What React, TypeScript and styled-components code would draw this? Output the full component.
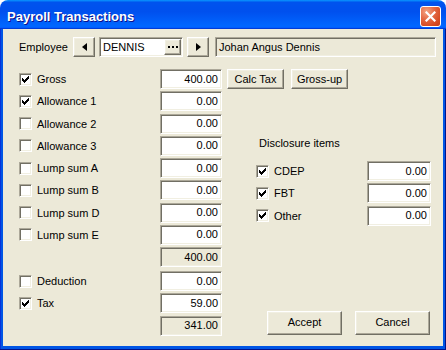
import styled, { createGlobalStyle, css } from "styled-components";

const GlobalStyle = createGlobalStyle`
  html, body {
    margin: 0;
    padding: 0;
    background: #ffffff;
  }
  body {
    font-family: "Liberation Sans", Arial, sans-serif;
    font-size: 11px;
    color: #000;
  }
`;

const sunken = css`
  box-sizing: border-box;
  border: 1px solid;
  border-color: #aca899 #ffffff #ffffff #aca899;
  box-shadow: inset 1px 1px #716f64, inset -1px -1px #f1efe2;
`;

const raised = css`
  box-sizing: border-box;
  border: 1px solid;
  border-color: #ffffff #716f64 #716f64 #ffffff;
  box-shadow: inset -1px -1px #aca899, inset 1px 1px #f1efe2;
  background: #ece9d8;
`;

const Window = styled.div`
  width: 446px;
  height: 350px;
  display: flex;
  flex-direction: column;
  border-radius: 8px 8px 0 0;
  overflow: hidden;
`;

const TitleBar = styled.div`
  height: 29px;
  flex: none;
  box-sizing: border-box;
  display: flex;
  align-items: center;
  justify-content: space-between;
  padding: 3px 5px 0 7px;
  background: linear-gradient(
    180deg,
    #0997ff,
    #0053ee 8%,
    #0050ee 40%,
    #0066ff 88%,
    #0066ff 93%,
    #005bff 95%,
    #003dd7 96%,
    #003dd7
  );
`;

const Title = styled.div`
  font-family: "Liberation Sans", Arial, sans-serif;
  font-weight: bold;
  font-size: 13px;
  color: #ffffff;
  text-shadow: 1px 1px #0f1089;
`;

const CloseButton = styled.div`
  width: 21px;
  height: 21px;
  box-sizing: border-box;
  border: 1px solid #ffffff;
  border-radius: 3px;
  display: flex;
  align-items: center;
  justify-content: center;
  background: radial-gradient(
    circle at 30% 25%,
    #f4a585 0%,
    #e46a45 40%,
    #d64a22 75%,
    #c23d17 100%
  );
`;

const Frame = styled.div`
  flex: 1;
  display: flex;
  padding: 0 3px 4px 3px;
  background: #0055e5;
  box-shadow: inset -1px -1px #00138c, inset 1px 0 #0831d9;
`;

const Body = styled.div`
  flex: 1;
  display: flex;
  flex-direction: column;
  padding: 8px 7px 0 16px;
  background: #ece9d8;
`;

const EmployeeRow = styled.div`
  display: flex;
  align-items: center;
  height: 20px;
`;

const EmployeeLabel = styled.span`
  width: 54px;
`;

const ArrowButton = styled.div`
  ${raised};
  width: 22px;
  height: 20px;
  display: flex;
  align-items: center;
  justify-content: center;
`;

const Combo = styled.div`
  ${sunken};
  width: 84px;
  height: 20px;
  margin: 0 4px;
  background: #ffffff;
  display: flex;
  align-items: center;
  padding: 2px 1px 2px 3px;
`;

const ComboText = styled.span`
  flex: 1;
`;

const EllipsisButton = styled.div`
  ${raised};
  width: 17px;
  height: 16px;
  display: flex;
  align-items: center;
  justify-content: center;
`;

const NameField = styled.div`
  ${sunken};
  flex: 1;
  height: 20px;
  margin-left: 6px;
  padding: 0 3px;
  display: flex;
  align-items: center;
`;

const Main = styled.div`
  display: flex;
  margin-top: 12px;
`;

const LeftPanel = styled.div`
  width: 203px;
  display: flex;
  flex-direction: column;
  gap: 2.25px;
`;

const Row = styled.div<{ $extra?: number }>`
  display: flex;
  align-items: center;
  height: 20px;
  margin-top: ${(p) => p.$extra ?? 0}px;
`;

const CheckBox = styled.div`
  ${sunken};
  width: 13px;
  height: 13px;
  flex: none;
  background: #ffffff;
  margin-right: 5px;
  display: flex;
  align-items: center;
  justify-content: center;
`;

const Label = styled.span`
  flex: 1;
  white-space: nowrap;
`;

const Field = styled.div<{ $w: number; $disabled?: boolean }>`
  ${sunken};
  width: ${(p) => p.$w}px;
  height: 20px;
  margin-left: auto;
  flex: none;
  padding: 0 3px 1px 3px;
  display: flex;
  align-items: center;
  justify-content: flex-end;
  background: ${(p) => (p.$disabled ? "#ece9d8" : "#ffffff")};
`;

const RightPanel = styled.div`
  flex: 1;
  margin-left: 5px;
  display: flex;
  flex-direction: column;
`;

const ButtonRow = styled.div`
  display: flex;
  gap: 7px;
`;

const PushButton = styled.div<{ $w: number; $h: number }>`
  ${raised};
  width: ${(p) => p.$w}px;
  height: ${(p) => p.$h}px;
  display: flex;
  align-items: center;
  justify-content: center;
  padding-bottom: 1px;
`;

const SectionLabel = styled.div`
  margin-top: 48px;
  padding-left: 32px;
  line-height: 13px;
`;

const Disclosure = styled.div`
  margin: 11px 5px 0 29px;
  display: flex;
  flex-direction: column;
  gap: 2.25px;
`;

const DialogButtons = styled.div`
  margin: auto 6px 1px 0;
  display: flex;
  justify-content: flex-end;
  gap: 13px;
`;

const Check = () => (
  <svg width="7" height="7" viewBox="0 0 7 7" shapeRendering="crispEdges">
    <rect x="6" y="0" width="1" height="1" />
    <rect x="5" y="1" width="2" height="1" />
    <rect x="0" y="2" width="1" height="1" />
    <rect x="4" y="2" width="3" height="1" />
    <rect x="0" y="3" width="2" height="1" />
    <rect x="3" y="3" width="3" height="1" />
    <rect x="0" y="4" width="5" height="1" />
    <rect x="1" y="5" width="3" height="1" />
    <rect x="2" y="6" width="1" height="1" />
  </svg>
);

const Arrow = ({ dir }: { dir: "left" | "right" }) => (
  <svg width="5" height="8" viewBox="0 0 5 8">
    <polygon points={dir === "left" ? "5,0 5,8 0,4" : "0,0 0,8 5,4"} fill="#000" />
  </svg>
);

const Dots = () => (
  <svg width="10" height="3" viewBox="0 0 10 3" shapeRendering="crispEdges">
    <rect x="0" y="0" width="2" height="2" />
    <rect x="4" y="0" width="2" height="2" />
    <rect x="8" y="0" width="2" height="2" />
  </svg>
);

type Item = { label: string; checked?: boolean; value: string; total?: boolean; extra?: number };

const leftItems: Item[] = [
  { label: "Gross", checked: true, value: "400.00" },
  { label: "Allowance 1", checked: true, value: "0.00" },
  { label: "Allowance 2", value: "0.00" },
  { label: "Allowance 3", value: "0.00" },
  { label: "Lump sum A", value: "0.00" },
  { label: "Lump sum B", value: "0.00" },
  { label: "Lump sum D", value: "0.00" },
  { label: "Lump sum E", value: "0.00" },
  { label: "", value: "400.00", total: true },
  { label: "Deduction", value: "0.00", extra: 1.75 },
  { label: "Tax", checked: true, value: "59.00" },
  { label: "", value: "341.00", total: true },
];

const disclosureItems: Item[] = [
  { label: "CDEP", checked: true, value: "0.00" },
  { label: "FBT", checked: true, value: "0.00" },
  { label: "Other", checked: true, value: "0.00" },
];

export default function App() {
  return (
    <>
      <GlobalStyle />
      <Window>
        <TitleBar>
          <Title>Payroll Transactions</Title>
          <CloseButton>
            <svg width="11" height="11" viewBox="0 0 11 11">
              <path d="M1.5 1.5 L9.5 9.5 M9.5 1.5 L1.5 9.5" stroke="#fff" strokeWidth="2.2" strokeLinecap="square" />
            </svg>
          </CloseButton>
        </TitleBar>
        <Frame>
          <Body>
            <EmployeeRow>
              <EmployeeLabel>Employee</EmployeeLabel>
              <ArrowButton>
                <Arrow dir="left" />
              </ArrowButton>
              <Combo>
                <ComboText>DENNIS</ComboText>
                <EllipsisButton>
                  <Dots />
                </EllipsisButton>
              </Combo>
              <ArrowButton>
                <Arrow dir="right" />
              </ArrowButton>
              <NameField>Johan Angus Dennis</NameField>
            </EmployeeRow>

            <Main>
              <LeftPanel>
                {leftItems.map((it, i) => (
                  <Row key={i} $extra={it.extra}>
                    {!it.total && (
                      <>
                        <CheckBox>{it.checked && <Check />}</CheckBox>
                        <Label>{it.label}</Label>
                      </>
                    )}
                    <Field $w={62} $disabled={it.total}>
                      {it.value}
                    </Field>
                  </Row>
                ))}
              </LeftPanel>

              <RightPanel>
                <ButtonRow>
                  <PushButton $w={57} $h={20}>Calc Tax</PushButton>
                  <PushButton $w={57} $h={20}>Gross-up</PushButton>
                </ButtonRow>
                <SectionLabel>Disclosure items</SectionLabel>
                <Disclosure>
                  {disclosureItems.map((it) => (
                    <Row key={it.label}>
                      <CheckBox>{it.checked && <Check />}</CheckBox>
                      <Label>{it.label}</Label>
                      <Field $w={64}>{it.value}</Field>
                    </Row>
                  ))}
                </Disclosure>
                <DialogButtons>
                  <PushButton $w={75} $h={24}>Accept</PushButton>
                  <PushButton $w={75} $h={24}>Cancel</PushButton>
                </DialogButtons>
              </RightPanel>
            </Main>
          </Body>
        </Frame>
      </Window>
    </>
  );
}
